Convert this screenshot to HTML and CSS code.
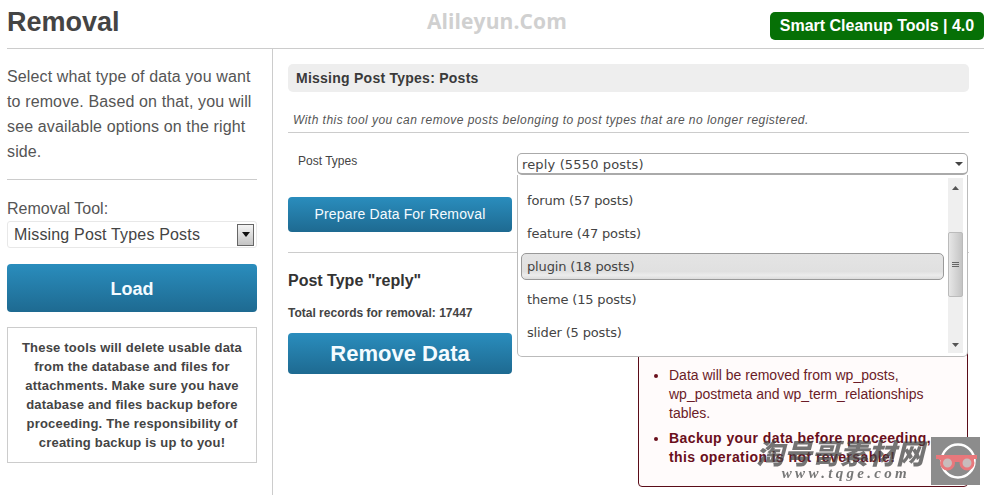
FILE: index.html
```html
<!DOCTYPE html>
<html lang="en">
<head>
<meta charset="utf-8">
<title>Removal</title>
<link rel="stylesheet" href="styles.css">
</head>
<body>
<div class="page">
  <header class="header">
    <h1 class="title">Removal</h1>
    <div class="site-mark">Alileyun.Com</div>
    <div class="badge">Smart Cleanup Tools | 4.0</div>
  </header>
  <div class="content">
    <aside class="side">
      <p class="intro">Select what type of data you want to remove. Based on that, you will see available options on the right side.</p>
      <div class="side-rule"></div>
      <label class="tool-label">Removal Tool:</label>
      <div class="tool-select">
        <span>Missing Post Types Posts</span>
        <span class="tool-arrow"><svg width="8" height="5" viewBox="0 0 8 5"><path d="M0 0H8L4 5Z" fill="#111"/></svg></span>
      </div>
      <button class="btn btn-load">Load</button>
      <div class="notice">These tools will delete usable data from the database and files for attachments. Make sure you have database and files backup before proceeding. The responsibility of creating backup is up to you!</div>
    </aside>
    <main class="main">
      <h2 class="panel-title">Missing Post Types: Posts</h2>
      <p class="desc">With this tool you can remove posts belonging to post types that are no longer registered.</p>
      <div class="form-row">
        <div class="form-left">
          <div class="field-label">Post Types</div>
          <button class="btn btn-prepare">Prepare Data For Removal</button>
        </div>
        <div class="combo">
          <div class="combo-value">
            <span>reply (5550 posts)</span>
            <svg width="8" height="4" viewBox="0 0 8 4"><path d="M0 0H8L4 4Z" fill="#444"/></svg>
          </div>
          <div class="combo-list">
            <ul class="options">
              <li>forum (57 posts)</li>
              <li>feature (47 posts)</li>
              <li class="active">plugin (18 posts)</li>
              <li>theme (15 posts)</li>
              <li>slider (5 posts)</li>
            </ul>
            <div class="scrollbar">
              <svg class="sb-up" width="7" height="4" viewBox="0 0 7 4"><path d="M0 4H7L3.500 0Z" fill="#555"/></svg>
              <div class="sb-thumb"><span></span><span></span><span></span></div>
              <svg class="sb-down" width="7" height="4" viewBox="0 0 7 4"><path d="M0 0H7L3.500 4Z" fill="#555"/></svg>
            </div>
          </div>
        </div>
      </div>
      <div class="main-rule"></div>
      <div class="result">
        <div class="result-left">
          <h3 class="result-title">Post Type "reply"</h3>
          <div class="total">Total records for removal: 17447</div>
          <button class="btn btn-remove">Remove Data</button>
        </div>
        <div class="warning">
          <ul>
            <li>Data will be removed from wp_posts, wp_postmeta and wp_term_relationships tables.</li>
            <li><strong>Backup your data before proceeding, this operation is not reversable!</strong></li>
          </ul>
        </div>
      </div>
    </main>
  </div>
  <div class="stamp">
    <div class="stamp-text">
      <div class="stamp-cn">淘号哥素材网</div>
      <div class="stamp-url">www.tqge.com</div>
    </div>
    <div class="stamp-logo">
      <svg width="49" height="48" viewBox="0 0 49 48">
        <circle cx="27" cy="24" r="16.500" fill="none" stroke="#fff" stroke-width="2.500"/>
        <path d="M5 18H46V22H43V23H8V22H5Z" fill="#e8787c"/>
        <circle cx="16.500" cy="26" r="6" fill="#c8bcbc" stroke="#e8787c" stroke-width="3"/>
        <circle cx="36" cy="26" r="6" fill="#c8bcbc" stroke="#e8787c" stroke-width="3"/>
        <path d="M22 22H31V25H22Z" fill="#e8787c"/>
      </svg>
    </div>
  </div>
</div>
</body>
</html>
```
FILE: styles.css
```css
* { box-sizing: border-box; }
html, body { margin: 0; padding: 0; }
body {
  width: 990px;
  height: 495px;
  overflow: hidden;
  background: #fff;
  font-family: "Liberation Sans", Arial, sans-serif;
  color: #444;
}
.page { position: relative; width: 990px; height: 495px; overflow: hidden; padding-left: 7px; }
.header {
  position: relative;
  width: 977px;
  height: 49px;
  border-bottom: 1px solid #ccc;
  display: flex;
  justify-content: space-between;
  align-items: flex-start;
}
.title { margin: 6px 0 0; font-size: 27px; line-height: 32px; font-weight: bold; color: #444; }
.site-mark {
  position: absolute;
  left: 420px;
  top: 8px;
  font-family: "Open Sans", sans-serif;
  font-size: 21px;
  line-height: 27px;
  font-weight: bold;
  letter-spacing: 0.1px;
  color: #d0d0d0;
}
.badge {
  margin-top: 12px;
  width: 214px;
  height: 28px;
  background: #067006;
  border-radius: 5px;
  color: #fff;
  font-size: 16px;
  line-height: 27px;
  font-weight: bold;
  text-align: center;
}
.content { display: flex; height: 446px; }
.side { padding-right: 15px; border-right: 1px solid #ccc; flex: none; width: 266px; }
.intro { margin: 15px 0 0; font-size: 16px; line-height: 25px; letter-spacing: 0.13px; color: #555; }
.side-rule { height: 1px; background: #ccc; margin-top: 15px; }
.tool-label { display: block; margin-top: 19px; font-size: 16px; line-height: 19px; color: #555; }
.tool-select {
  margin-top: 3px;
  height: 27px;
  border: 1px solid #e8e8e8;
  border-radius: 3px;
  display: flex;
  align-items: center;
  justify-content: space-between;
  padding: 0 2px 0 6px;
  font-size: 16px;
  letter-spacing: 0.17px;
  color: #444;
}
.tool-arrow {
  width: 17px;
  height: 22px;
  border: 1px solid #666;
  background: linear-gradient(#f4f4f4, #c4c4c4);
  display: flex;
  align-items: center;
  justify-content: center;
}
.btn {
  display: block;
  border: 0;
  padding: 0;
  color: #f4fbff;
  font-family: "Liberation Sans", Arial, sans-serif;
  text-align: center;
  border-radius: 4px;
  background: linear-gradient(#2a8dbd, #1e6a91);
}
.btn-load { width: 250px; height: 48px; margin-top: 16px; padding-top: 2px; font-size: 18px; font-weight: bold; }
.notice {
  margin-top: 15px;
  height: 136px;
  border: 1px solid #ccc;
  padding: 10px 12px;
  font-size: 13px;
  line-height: 19px;
  font-weight: bold;
  letter-spacing: 0.2px;
  text-align: center;
  color: #444;
}
.main { padding: 15px 0 0 15px; width: 696px; flex: none; }
.panel-title {
  margin: 0;
  height: 28px;
  background: #eee;
  border-radius: 5px;
  padding-left: 8px;
  font-size: 14px;
  line-height: 28px;
  font-weight: bold;
  letter-spacing: 0.25px;
  color: #3a3a3a;
}
.desc {
  margin: 18px 0 0;
  height: 23px;
  border-bottom: 1px solid #ccc;
  padding-left: 5px;
  font-size: 12px;
  line-height: 20px;
  font-style: italic;
  letter-spacing: 0.47px;
  color: #555;
}
.form-row { display: flex; justify-content: space-between; padding-top: 20px; height: 119px; }
.form-left { width: 224px; }
.field-label { padding-left: 10px; font-size: 12px; line-height: 16px; color: #444; }
.btn-prepare { width: 224px; height: 35px; margin-top: 28px; padding-bottom: 2px; font-size: 14px; letter-spacing: 0.15px; }
.combo { position: relative; width: 451px; margin-right: 1px; }
.combo-value {
  height: 22px;
  border: 1px solid #aaa;
  border-bottom: 2px solid #aaa;
  border-radius: 5px;
  display: flex;
  align-items: center;
  justify-content: space-between;
  padding: 1px 4px 0 4px;
  font-family: "DejaVu Sans", sans-serif;
  font-size: 13px;
  letter-spacing: 0.15px;
  color: #444;
  position: absolute;
  left: 0; right: 0; top: 0;
}
.combo-list {
  position: absolute;
  z-index: 2;
  left: 0; right: 0; top: 22px;
  height: 182px;
  background: #fff;
  border: 1px solid #bbb;
  border-top: 0;
  border-radius: 0 0 5px 5px;
  display: flex;
  justify-content: space-between;
  padding: 3px 4px 3px 3px;
}
.options { list-style: none; margin: 0; padding: 10px 0 0; width: 423px; font-family: "DejaVu Sans", sans-serif; font-size: 13px; letter-spacing: -0.15px; }
.options li { height: 27px; line-height: 25px; margin-bottom: 6px; padding-left: 6px; color: #444; }
.options li.active {
  border: 1px solid #999;
  border-radius: 5px;
  background: linear-gradient(#e4e4e4, #e0e0e0 70%, #ececec 85%, #dcdcdc);
  padding-left: 5px;
  margin-top: -1px;
  margin-bottom: 7px;
}
.scrollbar { position: relative; width: 15px; height: 100%; background: #efefef; }
.sb-up, .sb-down { position: absolute; left: 4px; }
.sb-up { top: 8px; }
.sb-down { bottom: 6px; }
.sb-thumb {
  position: absolute;
  left: 0; top: 54px;
  width: 15px;
  height: 65px;
  background: linear-gradient(90deg, #e6e6e6, #c4c4c4);
  border: 1px solid #bbb;
  border-radius: 2px;
  display: flex;
  flex-direction: column;
  justify-content: center;
  align-items: center;
  gap: 1px;
}
.sb-thumb span { width: 7px; height: 1px; background: #666; }
.main-rule { height: 1px; background: #ccc; }
.result { display: flex; justify-content: space-between; }
.result-left { width: 224px; }
.result-title { margin: 18px 0 0; font-size: 16px; line-height: 19px; font-weight: bold; color: #333; }
.total { margin-top: 15px; font-size: 12px; line-height: 16px; font-weight: bold; color: #444; }
.btn-remove { width: 224px; height: 41px; margin-top: 12px; font-size: 22px; font-weight: bold; }
.warning {
  width: 330px;
  height: 156px;
  margin-top: 78px;
  margin-right: 1px;
  border: 1px solid #5a0c18;
  border-radius: 4px;
  background: #fffbfb;
  padding: 34px 30px 0 30px;
  font-size: 14px;
  line-height: 19px;
  color: #6b1c28;
}
.warning ul { margin: 0; padding: 0; }
.warning li { margin-bottom: 6px; }
.warning strong { color: #6a0f1c; letter-spacing: 0.42px; }
.warning li::marker { color: #6a0f1c; }
.stamp { position: absolute; z-index: 3; right: 10px; top: 437px; display: flex; align-items: flex-start; gap: 7px; }
.stamp-cn {
  font-family: "Noto Sans CJK SC", sans-serif;
  font-size: 28px;
  line-height: 30px;
  height: 28px;
  font-weight: 900;
  font-style: italic;
  color: rgba(70, 70, 70, 0.75);
}
.stamp-url {
  font-family: "Liberation Serif", serif;
  font-size: 15px;
  line-height: 16px;
  font-weight: bold;
  font-style: italic;
  letter-spacing: 3.3px;
  color: #777;
  text-align: right;
  padding-right: 14px;
}
.stamp-logo { width: 49px; height: 48px; background: #8c8c8c; mix-blend-mode: multiply; }
```
